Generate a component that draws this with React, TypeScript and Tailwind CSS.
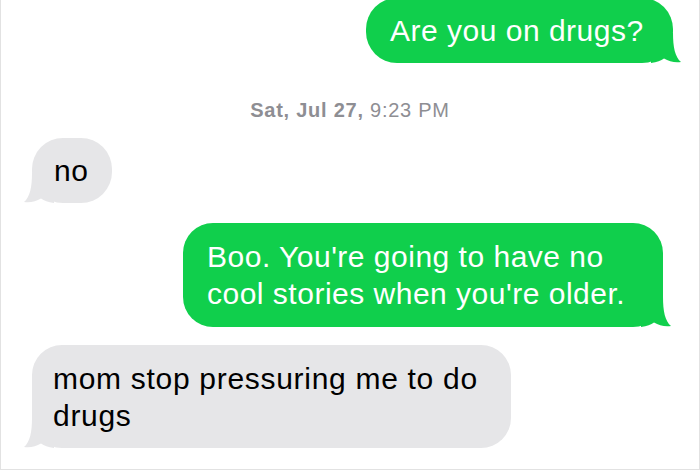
import React from "react";

const GREEN = "#10cf4c";
const GRAY = "#e6e6e8";

function Tail({ color, side }: { color: string; side: "left" | "right" }) {
  return (
    <svg
      width="30"
      height="30"
      viewBox="0 0 30 30"
      className={
        side === "right"
          ? "absolute bottom-0 right-[-8px]"
          : "absolute bottom-0 left-[-8px] scale-x-[-1]"
      }
    >
      <path
        d="M0,0 H22 C22,14 24,24 30,29 C24,30 18,28.5 13,25.5 C10,27.5 6,29.5 0,30 Z"
        fill={color}
      />
    </svg>
  );
}

export default function App() {
  return (
    <div className="w-[700px] h-[470px] bg-white border-x border-b border-[#e2e2e2] overflow-hidden font-['Liberation_Sans',Arial,sans-serif] flex flex-col">
      <div className="flex justify-end pr-[26px] mt-[-2px]">
        <div
          className="relative w-[307px] h-[65px] rounded-[31px] pl-[24px] flex items-center text-[30px] tracking-[0.5px] text-white"
          style={{ backgroundColor: GREEN }}
        >
          <span className="relative z-10">Are you on drugs?</span>
          <Tail color={GREEN} side="right" />
        </div>
      </div>

      <div className="mt-[35px] text-center text-[20px] leading-[24px] tracking-[0.75px] text-[#8e8e93]">
        <span className="font-bold">Sat, Jul 27,</span> 9:23 PM
      </div>

      <div className="mt-[16px] flex pl-[31px]">
        <div
          className="relative w-[80px] h-[65px] rounded-[31px] pl-[22px] flex items-center text-[30px] tracking-[0.5px] text-black"
          style={{ backgroundColor: GRAY }}
        >
          <span className="relative z-10">no</span>
          <Tail color={GRAY} side="left" />
        </div>
      </div>

      <div className="mt-[20px] flex justify-end pr-[36px]">
        <div
          className="relative w-[480px] h-[104px] rounded-[30px] px-[24px] flex items-center text-[30px] leading-[37px] tracking-[0.5px] text-white"
          style={{ backgroundColor: GREEN }}
        >
          <span className="relative z-10">
            Boo. You're going to have no
            <br />
            cool stories when you're older.
          </span>
          <Tail color={GREEN} side="right" />
        </div>
      </div>

      <div className="mt-[18px] flex pl-[31px]">
        <div
          className="relative w-[479px] h-[103px] rounded-[30px] px-[21px] flex items-center text-[30px] leading-[37px] tracking-[0.7px] text-black"
          style={{ backgroundColor: GRAY }}
        >
          <span className="relative z-10">
            mom stop pressuring me to do
            <br />
            drugs
          </span>
          <Tail color={GRAY} side="left" />
        </div>
      </div>
    </div>
  );
}
